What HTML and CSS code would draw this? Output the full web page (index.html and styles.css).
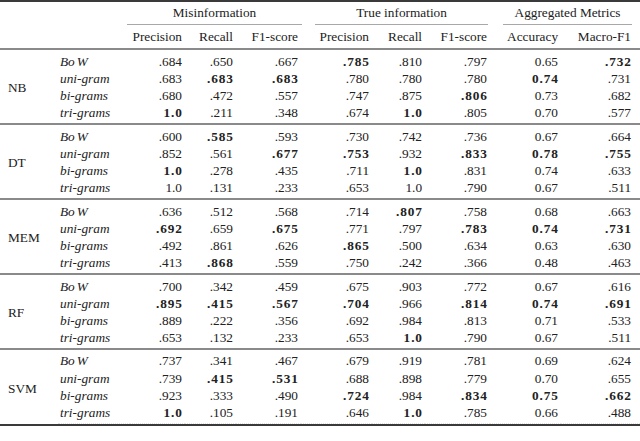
FILE: index.html
```html
<!DOCTYPE html>
<html>
<head>
<meta charset="utf-8">
<link rel="stylesheet" href="styles.css">
</head>
<body>
<div class="frame">
<table class="results">
<colgroup>
<col class="c-model"><col class="c-feat"><col class="c-p1"><col class="c-r1"><col class="c-f1"><col class="c-p2"><col class="c-r2"><col class="c-f2"><col class="c-acc"><col class="c-mac">
</colgroup>
<thead>
<tr class="h1">
<th rowspan="2" colspan="2"></th>
<th colspan="3"><div class="grp g-mis">Misinformation</div></th>
<th colspan="3"><div class="grp g-true">True information</div></th>
<th colspan="2"><div class="grp g-agg">Aggregated Metrics</div></th>
</tr>
<tr class="h2">
<th>Precision</th><th>Recall</th><th>F1-score</th>
<th>Precision</th><th>Recall</th><th>F1-score</th>
<th>Accuracy</th><th class="last">Macro-F1</th>
</tr>
</thead>
<tbody>
<tr><td class="model" rowspan="4">NB</td><td class="feat">Bo<span class="w">W</span></td><td>.684</td><td>.650</td><td>.667</td><td><b>.785</b></td><td>.810</td><td>.797</td><td>0.65</td><td class="last"><b>.732</b></td></tr>
<tr><td class="feat">uni-gram</td><td>.683</td><td><b>.683</b></td><td><b>.683</b></td><td>.780</td><td>.780</td><td>.780</td><td><b>0.74</b></td><td class="last">.731</td></tr>
<tr><td class="feat">bi-grams</td><td>.680</td><td>.472</td><td>.557</td><td>.747</td><td>.875</td><td><b>.806</b></td><td>0.73</td><td class="last">.682</td></tr>
<tr><td class="feat">tri-grams</td><td><b>1.0</b></td><td>.211</td><td>.348</td><td>.674</td><td><b>1.0</b></td><td>.805</td><td>0.70</td><td class="last">.577</td></tr>
</tbody>
<tbody>
<tr><td class="model" rowspan="4">DT</td><td class="feat">Bo<span class="w">W</span></td><td>.600</td><td><b>.585</b></td><td>.593</td><td>.730</td><td>.742</td><td>.736</td><td>0.67</td><td class="last">.664</td></tr>
<tr><td class="feat">uni-gram</td><td>.852</td><td>.561</td><td><b>.677</b></td><td><b>.753</b></td><td>.932</td><td><b>.833</b></td><td><b>0.78</b></td><td class="last"><b>.755</b></td></tr>
<tr><td class="feat">bi-grams</td><td><b>1.0</b></td><td>.278</td><td>.435</td><td>.711</td><td><b>1.0</b></td><td>.831</td><td>0.74</td><td class="last">.633</td></tr>
<tr><td class="feat">tri-grams</td><td>1.0</td><td>.131</td><td>.233</td><td>.653</td><td>1.0</td><td>.790</td><td>0.67</td><td class="last">.511</td></tr>
</tbody>
<tbody>
<tr><td class="model" rowspan="4">MEM</td><td class="feat">Bo<span class="w">W</span></td><td>.636</td><td>.512</td><td>.568</td><td>.714</td><td><b>.807</b></td><td>.758</td><td>0.68</td><td class="last">.663</td></tr>
<tr><td class="feat">uni-gram</td><td><b>.692</b></td><td>.659</td><td><b>.675</b></td><td>.771</td><td>.797</td><td><b>.783</b></td><td><b>0.74</b></td><td class="last"><b>.731</b></td></tr>
<tr><td class="feat">bi-grams</td><td>.492</td><td>.861</td><td>.626</td><td><b>.865</b></td><td>.500</td><td>.634</td><td>0.63</td><td class="last">.630</td></tr>
<tr><td class="feat">tri-grams</td><td>.413</td><td><b>.868</b></td><td>.559</td><td>.750</td><td>.242</td><td>.366</td><td>0.48</td><td class="last">.463</td></tr>
</tbody>
<tbody>
<tr><td class="model" rowspan="4">RF</td><td class="feat">Bo<span class="w">W</span></td><td>.700</td><td>.342</td><td>.459</td><td>.675</td><td>.903</td><td>.772</td><td>0.67</td><td class="last">.616</td></tr>
<tr><td class="feat">uni-gram</td><td><b>.895</b></td><td><b>.415</b></td><td><b>.567</b></td><td><b>.704</b></td><td>.966</td><td><b>.814</b></td><td><b>0.74</b></td><td class="last"><b>.691</b></td></tr>
<tr><td class="feat">bi-grams</td><td>.889</td><td>.222</td><td>.356</td><td>.692</td><td>.984</td><td>.813</td><td>0.71</td><td class="last">.533</td></tr>
<tr><td class="feat">tri-grams</td><td>.653</td><td>.132</td><td>.233</td><td>.653</td><td><b>1.0</b></td><td>.790</td><td>0.67</td><td class="last">.511</td></tr>
</tbody>
<tbody class="final">
<tr><td class="model" rowspan="4">SVM</td><td class="feat">Bo<span class="w">W</span></td><td>.737</td><td>.341</td><td>.467</td><td>.679</td><td>.919</td><td>.781</td><td>0.69</td><td class="last">.624</td></tr>
<tr><td class="feat">uni-gram</td><td>.739</td><td><b>.415</b></td><td><b>.531</b></td><td>.688</td><td>.898</td><td>.779</td><td>0.70</td><td class="last">.655</td></tr>
<tr><td class="feat">bi-grams</td><td>.923</td><td>.333</td><td>.490</td><td><b>.724</b></td><td>.984</td><td><b>.834</b></td><td><b>0.75</b></td><td class="last"><b>.662</b></td></tr>
<tr><td class="feat">tri-grams</td><td><b>1.0</b></td><td>.105</td><td>.191</td><td>.646</td><td><b>1.0</b></td><td>.785</td><td>0.66</td><td class="last">.488</td></tr>
</tbody>
</table>
</div>
</body>
</html>
```
FILE: styles.css
```css
html, body {
  margin: 0;
  padding: 0;
  background: #ffffff;
}

.frame {
  width: 640px;
  border-top: 2px solid #3a3a3a;
  border-bottom: 2px solid #3a3a3a;
}

.results {
  width: 640px;
  table-layout: fixed;
  border-collapse: separate;
  border-spacing: 0;
  font-family: "Liberation Serif", "Times New Roman", serif;
  font-size: 13.3px;
  color: #222222;
}

.c-model { width: 58px; }
.c-feat { width: 72px; }
.c-p1 { width: 55px; }
.c-r1 { width: 51px; }
.c-f1 { width: 65px; }
.c-p2 { width: 71px; }
.c-r2 { width: 53px; }
.c-f2 { width: 65px; }
.c-acc { width: 71px; }
.c-mac { width: 79px; }

.results th {
  font-weight: normal;
  padding: 0;
}

.h1 th {
  height: 23px;
  vertical-align: bottom;
}

.grp {
  line-height: 22px;
  text-align: center;
  border-bottom: 1px solid #a8a8a8;
  white-space: nowrap;
}

.g-mis { margin: 0 -1px 0 -3px; }
.g-true { margin: 0 2px 0 14px; }
.g-agg { margin: 0 8px 0 13px; }

.h2 th {
  height: 23px;
  line-height: 23px;
  text-align: right;
  padding-right: 3px;
  white-space: nowrap;
}

.results td {
  padding: 0 3px 0 0;
  line-height: 17.3px;
  text-align: right;
  white-space: nowrap;
}

.results th.last,
.results td.last {
  padding-right: 9px;
}

.results tbody tr:first-child td {
  border-top: 2px solid #8a8a8a;
  padding-top: 2.6px;
}

.results tbody tr:last-child td {
  padding-bottom: 1.2px;
}

.results tbody td.model {
  text-align: left;
  padding: 0 0 0 8px;
  vertical-align: middle;
}

.results tbody tr:first-child td.model {
  padding-top: 2.6px;
}

.results td.feat {
  text-align: left;
  padding-left: 2px;
  font-style: italic;
}

.feat .w {
  margin-left: 2px;
}

.results b {
  font-weight: bold;
  letter-spacing: 0.9px;
  margin-right: -0.9px;
}

.final tr:last-child td {
  padding-bottom: 0;
  border-bottom: 1px dotted #e2e2e2;
}
```
